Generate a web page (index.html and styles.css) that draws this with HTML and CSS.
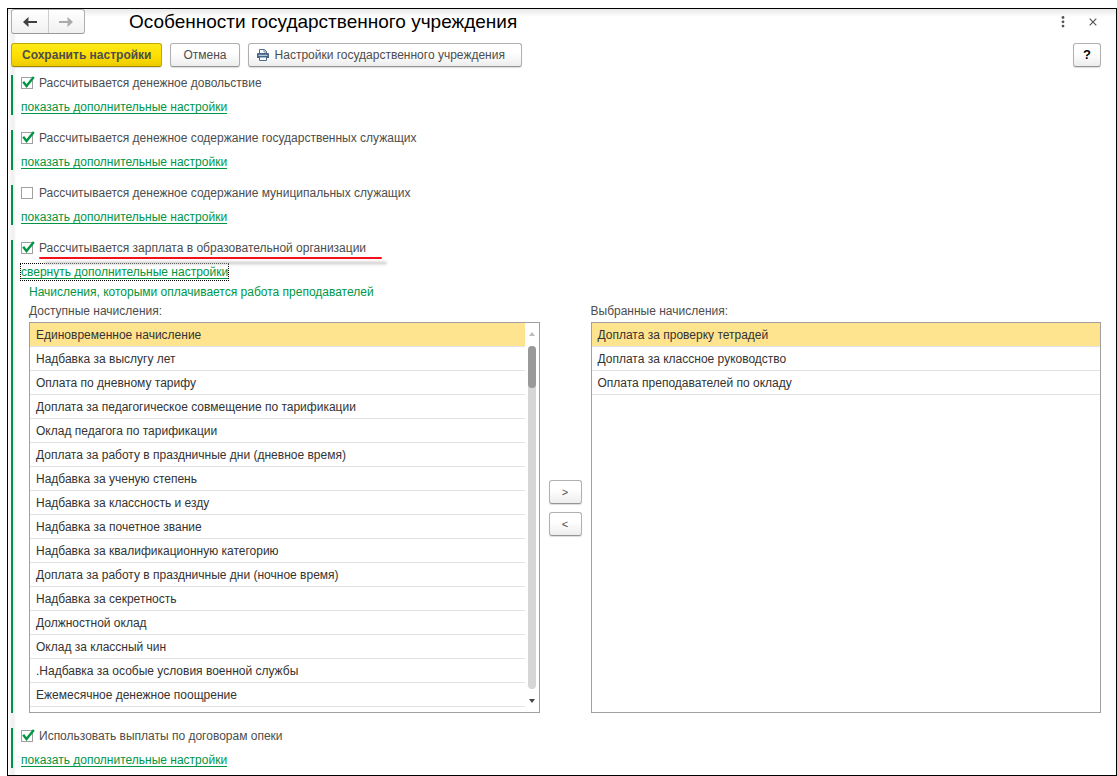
FILE: index.html
```html
<!DOCTYPE html>
<html lang="ru">
<head>
<meta charset="utf-8">
<title>Особенности государственного учреждения</title>
<link rel="stylesheet" href="styles.css">
</head>
<body>
<svg class="defs" width="0" height="0" aria-hidden="true">
  <symbol id="tick" viewBox="0 0 14 14"><path d="M2.200 5.800 5.500 10 12.800 1" fill="none" stroke="#009646" stroke-width="2.400"/></symbol>
</svg>
<main class="window">
  <header class="titlebar">
    <div class="history">
      <button type="button" class="history-button" aria-label="Назад"><svg width="16" height="12" viewBox="0 0 16 12"><path d="M6.500 1 1 6l5.500 5V7.500L5.500 7H15V5H5.500l1-.5z" fill="#404040"/></svg></button>
      <button type="button" class="history-button" aria-label="Вперед" disabled><svg width="16" height="12" viewBox="0 0 16 12"><path d="M9.500 1 15 6l-5.500 5V7.500l1-.5H1V5h9.500l-1-.5z" fill="#aaa"/></svg></button>
    </div>
    <h1 class="title">Особенности государственного учреждения</h1>
    <button type="button" class="icon-button" aria-label="Ещё"><svg width="4" height="12" viewBox="0 0 4 12" fill="#555"><circle cx="2" cy="1.500" r="1.400"/><circle cx="2" cy="5.800" r="1.400"/><circle cx="2" cy="10.100" r="1.400"/></svg></button>
    <button type="button" class="icon-button" aria-label="Закрыть"><svg width="8" height="8" viewBox="0 0 8 8"><path d="M.7.7l6.600 6.600M7.300.7.7 7.300" stroke="#555" stroke-width="1.200"/></svg></button>
  </header>

  <div class="toolbar">
    <button type="button" class="button primary">Сохранить настройки</button>
    <button type="button" class="button">Отмена</button>
    <button type="button" class="button print"><svg width="12" height="12" viewBox="0 0 12 12"><path d="M2.500 4V.5h5l2 2V4" fill="#fff" stroke="#4c6d8e"/><path d="M7 .5V3h2.500" fill="none" stroke="#4c6d8e" stroke-width=".8"/><path d="M1 4h10a1 1 0 0 1 1 1v4H0V5a1 1 0 0 1 1-1z" fill="#426587"/><path d="M1.500 6.300h9" stroke="#d5e2ec"/><path d="M2.500 8h7v3.500h-7z" fill="#fff" stroke="#4c6d8e"/></svg>Настройки государственного учреждения</button>
    <button type="button" class="button help" aria-label="Справка">?</button>
  </div>

  <div class="sections">
    <section class="section">
      <label class="option"><span class="check"><input type="checkbox" checked><svg class="tick"><use href="#tick"/></svg></span>Рассчитывается денежное довольствие</label>
      <a class="link" href="#">показать дополнительные настройки</a>
    </section>
    <section class="section">
      <label class="option"><span class="check"><input type="checkbox" checked><svg class="tick"><use href="#tick"/></svg></span>Рассчитывается денежное содержание государственных служащих</label>
      <a class="link" href="#">показать дополнительные настройки</a>
    </section>
    <section class="section">
      <label class="option"><span class="check"><input type="checkbox"><svg class="tick"><use href="#tick"/></svg></span>Рассчитывается денежное содержание муниципальных служащих</label>
      <a class="link" href="#">показать дополнительные настройки</a>
    </section>
    <section class="section">
      <label class="option"><span class="check"><input type="checkbox" checked><svg class="tick"><use href="#tick"/></svg></span><span class="marked">Рассчитывается зарплата в образовательной организации</span></label>
      <a class="link focused" href="#">свернуть дополнительные настройки</a>
      <div class="details">
        <h2 class="group-title">Начисления, которыми оплачивается работа преподавателей</h2>
        <div class="picker">
          <div class="column">
            <span class="caption" id="available">Доступные начисления:</span>
            <div class="list">
              <ul class="rows" role="listbox" aria-labelledby="available">
                <li class="row selected" role="option" aria-selected="true">Единовременное начисление</li>
                <li class="row" role="option">Надбавка за выслугу лет</li>
                <li class="row" role="option">Оплата по дневному тарифу</li>
                <li class="row" role="option">Доплата за педагогическое совмещение по тарификации</li>
                <li class="row" role="option">Оклад педагога по тарификации</li>
                <li class="row" role="option">Доплата за работу в праздничные дни (дневное время)</li>
                <li class="row" role="option">Надбавка за ученую степень</li>
                <li class="row" role="option">Надбавка за классность и езду</li>
                <li class="row" role="option">Надбавка за почетное звание</li>
                <li class="row" role="option">Надбавка за квалификационную категорию</li>
                <li class="row" role="option">Доплата за работу в праздничные дни (ночное время)</li>
                <li class="row" role="option">Надбавка за секретность</li>
                <li class="row" role="option">Должностной оклад</li>
                <li class="row" role="option">Оклад за классный чин</li>
                <li class="row" role="option">.Надбавка за особые условия военной службы</li>
                <li class="row" role="option">Ежемесячное денежное поощрение</li>
              </ul>
              <div class="scrollbar" aria-hidden="true">
                <svg width="6" height="4" viewBox="0 0 6 4"><path d="M0 4h6L3 0z" fill="#bbb"/></svg>
                <div class="track"><div class="thumb"></div></div>
                <svg width="6" height="4" viewBox="0 0 6 4"><path d="M0 0h6L3 4z" fill="#444"/></svg>
              </div>
            </div>
          </div>
          <div class="transfer">
            <button type="button" class="button move" aria-label="Добавить">&gt;</button>
            <button type="button" class="button move" aria-label="Убрать">&lt;</button>
          </div>
          <div class="column">
            <span class="caption" id="chosen">Выбранные начисления:</span>
            <div class="list">
              <ul class="rows" role="listbox" aria-labelledby="chosen">
                <li class="row selected" role="option" aria-selected="true">Доплата за проверку тетрадей</li>
                <li class="row" role="option">Доплата за классное руководство</li>
                <li class="row" role="option">Оплата преподавателей по окладу</li>
              </ul>
            </div>
          </div>
        </div>
      </div>
    </section>
    <section class="section">
      <label class="option"><span class="check"><input type="checkbox" checked><svg class="tick"><use href="#tick"/></svg></span>Использовать выплаты по договорам опеки</label>
      <a class="link" href="#">показать дополнительные настройки</a>
    </section>
  </div>
</main>
</body>
</html>
```
FILE: styles.css
```css
* { box-sizing: border-box; }

body {
  margin: 8px 0 0 7px;
  background: #fff;
  color: #4d4d4d;
  font: 12px/16px "Liberation Sans", Arial, sans-serif;
}

button { font: inherit; color: inherit; }

.defs { display: block; }

.window {
  border: 1px solid #000;
  padding: 0 15px 7px 3px;
  background:
    linear-gradient(#e9e9e9, #fff) 0 0 / 100% 8px no-repeat,
    linear-gradient(90deg, #fff, #f1f1f1 4px, #f1f1f1 6px, #fff 8px) 0 0 / 8px 100% no-repeat;
}

.titlebar {
  display: flex;
  align-items: center;
  height: 25px;
}

.history {
  display: flex;
  width: 74px;
  height: 25px;
  border: 1px solid #b0b0b0;
  border-bottom-color: #999;
  border-radius: 3px;
  background: linear-gradient(#fff, #f0f0f0);
}

.history-button {
  flex: 1;
  display: flex;
  align-items: center;
  justify-content: center;
  padding: 0;
  border: 0;
  background: none;
}

.history-button + .history-button { border-left: 1px solid #ccc; }

.title {
  flex: 1;
  margin: 0 0 0 44px;
  color: #000;
  font-size: 19px;
  font-weight: normal;
  line-height: 24px;
}

.icon-button {
  display: flex;
  align-items: center;
  justify-content: center;
  width: 16px;
  height: 16px;
  margin-left: 14px;
  padding: 0;
  border: 0;
  background: none;
}

.toolbar {
  display: flex;
  gap: 8px;
  margin-top: 9px;
}

.button {
  display: flex;
  align-items: center;
  justify-content: center;
  gap: 6px;
  height: 24px;
  padding: 0 12px;
  border: 1px solid #b0b0b0;
  border-bottom-color: #949494;
  border-radius: 3px;
  background: linear-gradient(#fff 40%, #ededed);
  box-shadow: 0 1px 1px #ddd;
  white-space: nowrap;
}

.primary {
  padding: 0 10px;
  border-color: #c5a900;
  border-bottom-color: #a08900;
  background: linear-gradient(#ffea1a, #ffe000 50%, #edcc00);
  font-weight: bold;
}

.print { padding: 0 16px 0 8px; }

.help {
  width: 28px;
  margin-left: auto;
  padding: 0;
  color: #000;
  font-size: 13px;
  font-weight: bold;
}

.sections {
  display: flex;
  flex-direction: column;
  gap: 15px;
  margin-top: 8px;
}

.section {
  display: flex;
  flex-direction: column;
  align-items: flex-start;
  border-left: 2px solid #009646;
  padding-left: 8px;
}

.option {
  display: flex;
  align-items: center;
  gap: 5px;
}

.check {
  display: grid;
  width: 13px;
  height: 16px;
  align-items: center;
}

.check input {
  grid-area: 1 / 1;
  appearance: none;
  width: 12px;
  height: 12px;
  margin: 0;
  border: 1px solid #a0a0a0;
  background: #fff;
}

.tick {
  grid-area: 1 / 1;
  visibility: hidden;
  width: 14px;
  height: 14px;
  pointer-events: none;
}

.check input:checked + .tick { visibility: visible; }

.marked { position: relative; }

.marked::after {
  content: "";
  position: absolute;
  top: 17px;
  left: 0;
  right: -16px;
  height: 2px;
  border-radius: 1px;
  background: #f5101a;
  box-shadow: 5px 5px 3px #bbb;
}

.link {
  margin-top: 8px;
  color: #009646;
  text-decoration: underline;
  text-underline-offset: 2px;
}

.focused { outline: 1px dotted #000; }

.details {
  align-self: stretch;
  padding: 4px 0 0 8px;
}

.group-title {
  margin: 0;
  color: #009646;
  font-size: 12px;
  font-weight: normal;
}

.picker {
  display: flex;
  margin-top: 3px;
}

.column {
  flex: 1;
  min-width: 0;
  display: flex;
  flex-direction: column;
  gap: 3px;
}

.list {
  flex: 1;
  display: flex;
  border: 1px solid #a0a0a0;
  background: #fff;
}

.rows {
  flex: 1;
  margin: 0;
  padding: 0 0 5px;
  list-style: none;
}

.row {
  height: 24px;
  padding: 4px 6px 3px;
  border-bottom: 1px solid #e2e2e2;
  color: #333;
}

.selected {
  background: #ffe48f;
}

.scrollbar {
  display: flex;
  flex-direction: column;
  align-items: center;
  gap: 10px;
  width: 14px;
  padding: 9px 0;
}

.track {
  flex: 1;
  width: 8px;
  border-radius: 4px;
  background: #d6d6d6;
}

.thumb {
  width: 8px;
  height: 42px;
  border-radius: 4px;
  background: #999;
}

.transfer {
  display: flex;
  flex-direction: column;
  justify-content: center;
  align-items: center;
  gap: 8px;
  width: 51px;
}

.move {
  width: 33px;
  padding: 0;
  font-size: 11px;
}
```
